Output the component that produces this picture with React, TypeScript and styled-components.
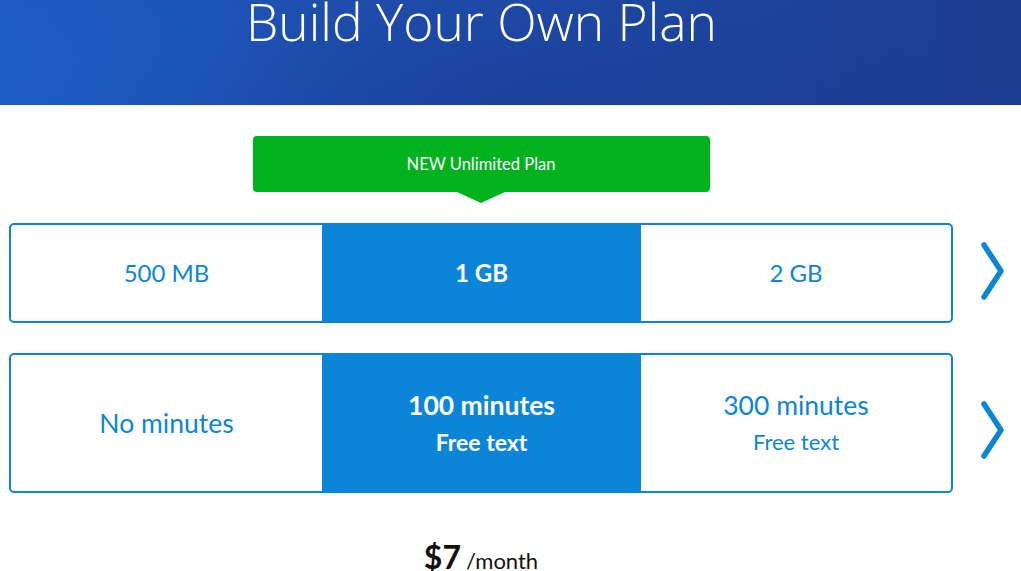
import React, { useState } from 'react';
import styled, { createGlobalStyle } from 'styled-components';

const BLUE = '#0c85d9';
const GREEN = '#00b31e';

const GlobalStyle = createGlobalStyle`
  html, body {
    margin: 0;
    padding: 0;
    background: #ffffff;
    font-family: Lato, "Noto Sans", Arial, sans-serif;
    overflow: hidden;
  }
`;

interface Option {
  title: string;
  sub?: string;
}

const dataOptions: Option[] = [
  { title: '500 MB' },
  { title: '1 GB' },
  { title: '2 GB' },
];

const minuteOptions: Option[] = [
  { title: 'No minutes' },
  { title: '100 minutes', sub: 'Free text' },
  { title: '300 minutes', sub: 'Free text' },
];

const Chevron = () => (
  <svg width="26" height="60" viewBox="0 0 26 60" fill="none">
    <path
      d="M4 4 L21 30 L4 56"
      stroke={BLUE}
      strokeWidth="5.5"
      strokeLinecap="round"
      strokeLinejoin="round"
    />
  </svg>
);

interface OptionRowProps {
  options: Option[];
  tall?: boolean;
  shift: number;
}

const OptionRow = (props: OptionRowProps) => {
  const { options, tall, shift } = props;
  const [selected, setSelected] = useState<number>(1);

  return (
    <Row>
      <OptionBox $tall={tall}>
        {options.map((option, i) => (
          <Cell key={option.title} $active={i === selected} onClick={() => setSelected(i)}>
            <CellTitle $active={i === selected} $large={tall}>{option.title}</CellTitle>
            {option.sub && <CellSub $active={i === selected}>{option.sub}</CellSub>}
          </Cell>
        ))}
      </OptionBox>
      <NextButton $shift={shift}>
        <Chevron />
      </NextButton>
    </Row>
  );
};

const App = () => (
  <>
    <GlobalStyle />
    <Hero>
      <HeroTitle>Build Your Own Plan</HeroTitle>
    </Hero>
    <Main>
      <BadgeWrap>
        <Badge>NEW Unlimited Plan</Badge>
      </BadgeWrap>
      <OptionRow options={dataOptions} shift={-2} />
      <OptionRow options={minuteOptions} tall shift={7} />
      <Price>
        <PriceAmount>$7</PriceAmount>
        <PricePeriod>/month</PricePeriod>
      </Price>
    </Main>
  </>
);

export default App;

const Hero = styled.header`
  height: 105px;
  background:
    radial-gradient(ellipse 300px 140px at 40px 60px, rgba(30, 100, 205, 0.35), transparent),
    radial-gradient(ellipse 500px 120px at 560px 110px, rgba(20, 50, 140, 0.35), transparent),
    linear-gradient(90deg, #1c59c0 0%, #1e4dab 35%, #1e46a0 65%, #1d3d90 100%);
  display: flex;
  justify-content: center;
  overflow: hidden;
`;

const HeroTitle = styled.h1`
  margin: 0 58px 0 0;
  font-family: "Open Sans", "Noto Sans", sans-serif;
  font-weight: 300;
  font-size: 51.5px;
  line-height: 42px;
  color: #ffffff;
  white-space: nowrap;
`;

const Main = styled.main`
  padding: 31px 9px 0;
  display: flex;
  flex-direction: column;
`;

const BadgeWrap = styled.div`
  width: 944px;
  display: flex;
  justify-content: center;
  margin-bottom: 31px;
`;

const Badge = styled.div`
  position: relative;
  width: 457px;
  height: 56px;
  border-radius: 4px;
  background: ${GREEN};
  color: #ffffff;
  font-size: 16.5px;
  display: flex;
  align-items: center;
  justify-content: center;

  &::after {
    content: '';
    position: absolute;
    left: 50%;
    bottom: -11px;
    transform: translateX(-50%);
    border-left: 24px solid transparent;
    border-right: 24px solid transparent;
    border-top: 11px solid ${GREEN};
  }
`;

const Row = styled.div`
  display: flex;
  align-items: center;
  margin-bottom: 30px;
`;

const OptionBox = styled.div<{ $tall?: boolean }>`
  flex-shrink: 0;
  width: 944px;
  height: ${(p) => (p.$tall ? 140 : 100)}px;
  box-sizing: border-box;
  border: 2px solid ${BLUE};
  border-radius: 5px;
  display: grid;
  grid-template-columns: 311px 319px 310px;
`;

const Cell = styled.div<{ $active: boolean }>`
  margin: -2px 0;
  background: ${(p) => (p.$active ? BLUE : 'transparent')};
  display: flex;
  flex-direction: column;
  align-items: center;
  justify-content: center;
  gap: 8px;
  cursor: pointer;
`;

const CellTitle = styled.div<{ $active: boolean; $large?: boolean }>`
  font-size: ${(p) => (p.$large ? 26.5 : 24)}px;
  line-height: 30px;
  font-weight: ${(p) => (p.$active ? 700 : 400)};
  color: ${(p) => (p.$active ? '#ffffff' : BLUE)};
`;

const CellSub = styled.div<{ $active: boolean }>`
  font-size: ${(p) => (p.$active ? 23 : 22)}px;
  line-height: 28px;
  font-weight: ${(p) => (p.$active ? 700 : 400)};
  color: ${(p) => (p.$active ? '#ffffff' : BLUE)};
`;

const NextButton = styled.div<{ $shift: number }>`
  flex-shrink: 0;
  width: 80px;
  display: flex;
  justify-content: center;
  transform: translateY(${(p) => p.$shift}px);
  cursor: pointer;
`;

const Price = styled.div`
  width: 944px;
  display: flex;
  justify-content: center;
  align-items: baseline;
  gap: 5px;
  margin-top: 14px;
  color: #111111;
`;

const PriceAmount = styled.span`
  font-size: 32px;
  font-weight: 700;
`;

const PricePeriod = styled.span`
  font-size: 22px;
`;
